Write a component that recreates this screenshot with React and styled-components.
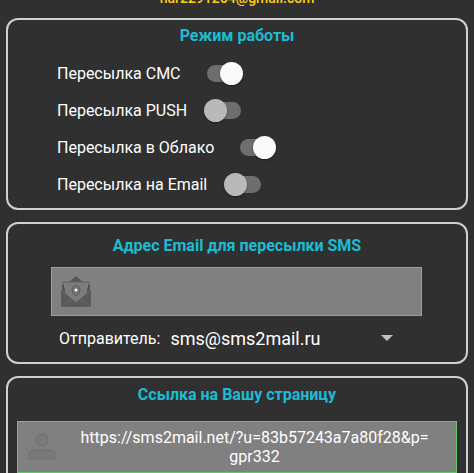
import React, {useState} from 'react';
import styled, {createGlobalStyle} from 'styled-components';

const GlobalStyle = createGlobalStyle`
  * {
    box-sizing: border-box;
  }
  html {
    scrollbar-width: none;
  }
  body {
    margin: 0;
    background-color: #303030;
    color: #fff;
    font-family: Roboto, "Noto Sans", sans-serif;
    font-size: 16px;
  }
`

const SScreen = styled.main`
  display: flex;
  flex-direction: column;
  gap: 12px;
  padding: 0 6px 12px;
`

const SAccount = styled.div`
  display: flex;
  flex-direction: column;
  justify-content: flex-end;
  height: 6px;
  overflow: hidden;
  color: #fdd017;
  font-size: 14px;
  font-weight: 500;
  line-height: 16px;
  text-align: center;
`

const SCard = styled.section`
  padding: ${(props) => props.$padding};
  border: solid 2px #d0d0d0;
  border-radius: 12px;
`

const STitle = styled.h2`
  margin: 0 0 ${(props) => props.$gap}px;
  color: #1cbcd4;
  font-size: 16px;
  font-weight: 700;
  line-height: 20px;
  text-align: center;
`

const SSwitchRow = styled.label`
  display: flex;
  align-items: center;
  gap: ${(props) => (props.$wide ? 23 : 17)}px;
  height: 37px;
  padding-left: 49px;
`

const SSwitch = styled.input`
  appearance: none;
  display: grid;
  width: 39px;
  height: 23px;
  margin: 0;
  cursor: pointer;

  &::before,
  &::after {
    content: "";
    grid-area: 1 / 1;
    align-self: center;
  }
  &::before {
    height: 17px;
    margin: 0 2px 0 3px;
    border-radius: 9px;
    background-color: #6e6e6e;
  }
  &::after {
    justify-self: start;
    width: 23px;
    height: 23px;
    border-radius: 50%;
    background-color: #b9b9b9;
    box-shadow: 0 1px 2px rgba(0, 0, 0, 0.4);
  }
  &:checked::after {
    justify-self: end;
    background-color: #fafafa;
  }
`

const SField = styled.div`
  display: flex;
  align-items: center;
  border: solid 1px #66c46b;
  background-color: #808080;
`

const SEmailField = styled(SField)`
  height: 49px;
  margin: 0 44px 0 43px;
  padding-left: 8px;
`

const SEmailInput = styled.input`
  flex: 1;
  min-width: 0;
  height: 100%;
  padding: 0 8px;
  border: none;
  outline: none;
  background: none;
  color: #fff;
  font: inherit;
`

const SLinkField = styled(SField)`
  min-height: 52px;
  margin: 0 9px;
  padding: 0 20px 0 9px;
`

const SPageLink = styled.a`
  flex: 1;
  padding-left: 16px;
  color: #fff;
  line-height: 19px;
  text-align: center;
  text-decoration: none;
`

const SLinkPart = styled.span`
  display: block;
`

const SSenderRow = styled.div`
  display: flex;
  align-items: center;
  gap: 10px;
  margin: 9px 73px 0 51px;
`

const SSelectBox = styled.div`
  display: grid;
  flex: 1;
  align-items: center;
`

const SSelect = styled.select`
  grid-area: 1 / 1;
  appearance: none;
  width: 100%;
  height: 26px;
  padding: 0;
  border: none;
  outline: none;
  background: none;
  color: #fff;
  font-family: inherit;
  font-size: 18px;
`

const SArrow = styled.span`
  grid-area: 1 / 1;
  justify-self: end;
  border: solid transparent;
  border-width: 6px 6px 0;
  border-top-color: #c1c1c1;
  pointer-events: none;
`

const MailIcon = () => (
  <svg width="32" height="32" viewBox="0 0 32 32" aria-hidden="true">
    <path d="M16 0 L23 6 H9 Z" fill="#565656" />
    <path d="M3 6 H29 V16 L16 26 L3 16 Z" fill="#7c7c7c" />
    <path d="M3 13 V6 H29 V13" fill="none" stroke="#606060" />
    <path d="M3 9 V13 M29 9 V13" stroke="#505050" strokeWidth="2" />
    <path d="M1 14 L16 26 L31 14 V30 Q31 31 30 31 H2 Q1 31 1 30 Z" fill="#5a5a5a" />
    <path d="M2 30 L12 23 M30 30 L20 23" stroke="#636363" />
    <path d="M1 14 L5 12 V17 Z M31 14 L27 12 V17 Z" fill="#5a5a5a" />
    <path d="M16 9 Q20 10 20 14 Q20 18 16 20 Q12 18 12 14 Q12 10 16 9 Z" fill="#747474" stroke="#606060" />
    <circle cx="16" cy="14" r="1.5" fill="#fff" />
  </svg>
)

const UserIcon = () => (
  <svg width="30" height="30" viewBox="0 0 30 30" aria-hidden="true">
    <g fill="#797979" stroke="#6e6e6e">
      <circle cx="15" cy="8" r="6" />
      <path d="M2 27 V23 Q2 18 8 18 H22 Q28 18 28 23 V27 Z" />
    </g>
  </svg>
)

const modes = [
  {id: 'sms', text: 'Пересылка СМС', on: true},
  {id: 'push', text: 'Пересылка PUSH', on: false},
  {id: 'cloud', text: 'Пересылка в Облако', on: true},
  {id: 'email', text: 'Пересылка на Email', on: false},
]

const ModeSwitch = (props) => {
  const {mode} = props;
  const [on, setOn] = useState(mode.on);

  return (
    <SSwitchRow $wide={mode.on}>
      {mode.text}
      <SSwitch type="checkbox" role="switch" checked={on} onChange={() => setOn(!on)} />
    </SSwitchRow>
  )
}

export default function App() {
  return (
    <>
      <GlobalStyle />
      <SScreen>
        <SAccount>nar2291264@gmail.com</SAccount>
        <SCard $padding="6px 0 5px">
          <STitle $gap={9}>Режим работы</STitle>
          {modes.map((mode) => (
            <ModeSwitch mode={mode} key={mode.id} />
          ))}
        </SCard>
        <SCard $padding="12px 0 11px">
          <STitle $gap={11}>Адрес Email для пересылки SMS</STitle>
          <SEmailField>
            <MailIcon />
            <SEmailInput type="email" aria-label="Адрес Email для пересылки SMS" />
          </SEmailField>
          <SSenderRow>
            <label htmlFor="sender">Отправитель:</label>
            <SSelectBox>
              <SSelect id="sender">
                <option>sms@sms2mail.ru</option>
              </SSelect>
              <SArrow />
            </SSelectBox>
          </SSenderRow>
        </SCard>
        <SCard $padding="7px 0 12px">
          <STitle $gap={16}>Ссылка на Вашу страницу</STitle>
          <SLinkField>
            <UserIcon />
            <SPageLink href="https://sms2mail.net/?u=83b57243a7a80f28&p=gpr332">
              <SLinkPart>https://sms2mail.net/?u=83b57243a7a80f28&amp;p=</SLinkPart>
              <SLinkPart>gpr332</SLinkPart>
            </SPageLink>
          </SLinkField>
        </SCard>
      </SScreen>
    </>
  )
}
